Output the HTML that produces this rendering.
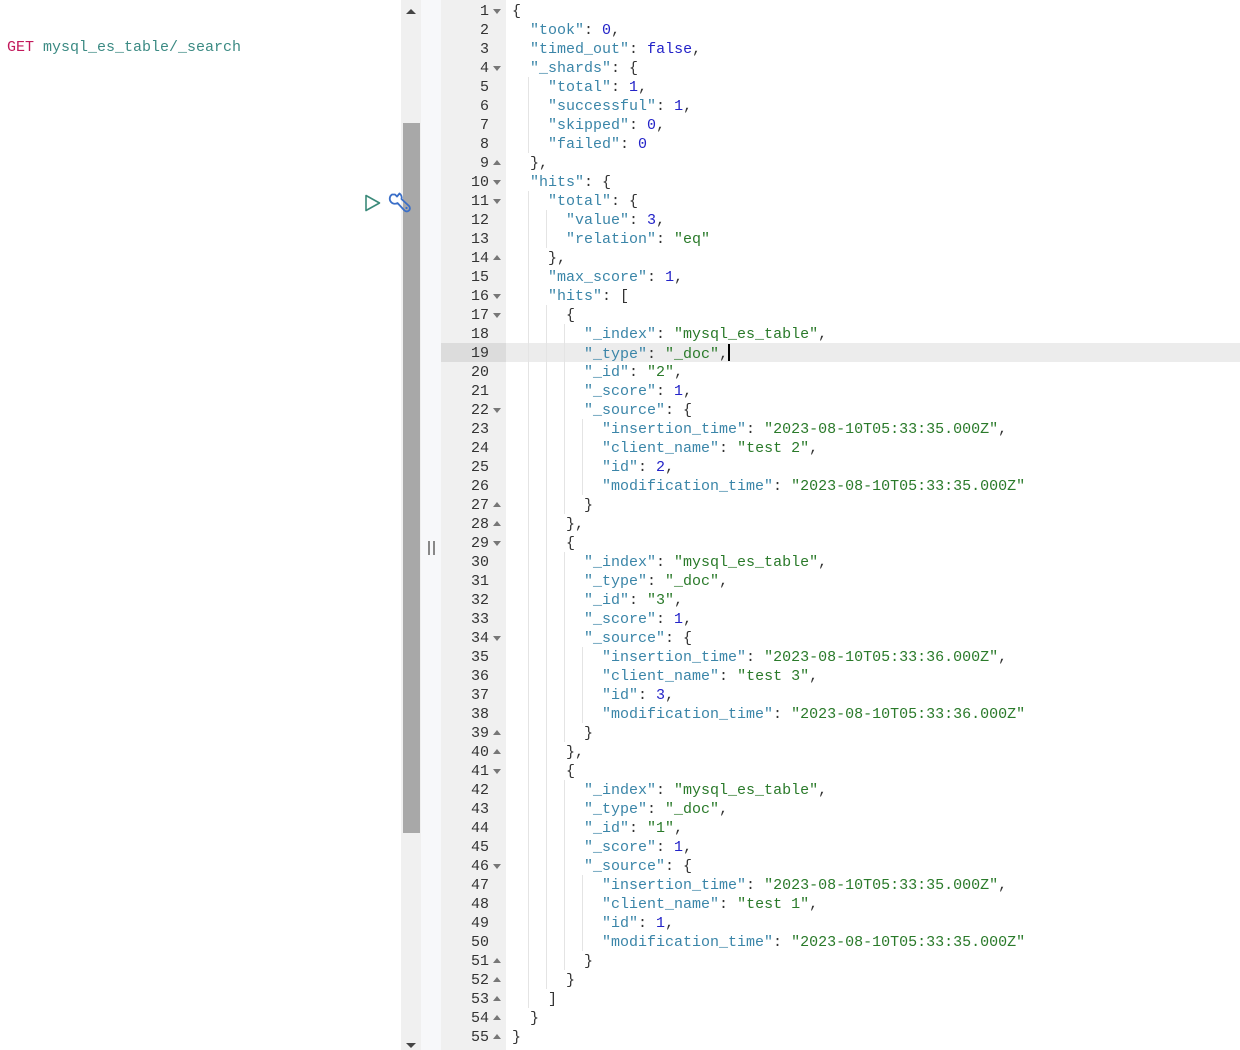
<!DOCTYPE html>
<html><head><meta charset="utf-8"><style>
html,body{margin:0;padding:0;background:#fff;width:1240px;height:1050px;overflow:hidden;position:relative;font-family:"Liberation Mono",monospace;font-size:15px;}
.req{position:absolute;left:7px;top:38px;line-height:20px;white-space:pre;}
.m{color:#c2185b}.p{color:#3b8a83}
.track{position:absolute;left:401px;top:0;width:20px;height:1050px;background:#f0f0f0;}
.thumb{position:absolute;left:403px;top:123px;width:17px;height:710px;background:#a8a8a8;}
.div{position:absolute;left:421px;top:0;width:20px;height:1050px;background:#f7f8fa;}
.gut{position:absolute;left:441px;top:0;width:65px;height:1050px;background:#f0f0f0;}
.hlg{position:absolute;left:441px;top:343px;width:65px;height:19px;background:#dcdcdc;}
.hll{position:absolute;left:506px;top:343px;width:734px;height:19px;background:#ececec;}
.n{position:absolute;left:441px;width:48px;text-align:right;color:#333;height:19px;line-height:19px;margin-top:1px;}
.f{position:absolute;left:493px;width:9px;height:19px;margin-top:1px;}
.f.d::after{content:"";position:absolute;left:0;top:7px;border-left:4px solid transparent;border-right:4px solid transparent;border-top:5px solid #777;}
.f.u::after{content:"";position:absolute;left:0;top:6px;border-left:4px solid transparent;border-right:4px solid transparent;border-bottom:5px solid #777;}
.l{position:absolute;left:512px;height:19px;line-height:19px;white-space:pre;color:#333;margin-top:1px;}
.g{position:absolute;left:16px;top:-1px;height:19px;background:repeating-linear-gradient(90deg,#e4e4e4 0 1px,transparent 1px 18px);}
.k{color:#3a85a8}.s{color:#2a7a2a}.v{color:#2323c8}
.cur{display:inline-block;width:2px;height:17px;background:#000;vertical-align:-3px;}
</style></head><body>
<div class="req"><span class="m">GET</span> <span class="p">mysql_es_table/_search</span></div>
<svg style="position:absolute;left:363px;top:193px" width="20" height="20" viewBox="0 0 20 20"><path d="M3 2.5 L16.5 10 L3 17.5 Z" fill="none" stroke="#3b8a7a" stroke-width="1.6" stroke-linejoin="round"/></svg>
<div class="track"></div><div class="thumb"></div>
<svg style="position:absolute;left:387px;top:191px" width="26" height="26" viewBox="0 0 26 26"><path d="M5 3.5 A5 5 0 0 0 4 11 A5 5 0 0 0 10.5 12 L17.5 19.5 A3 3 0 0 0 22 15 L14.5 8 A5 5 0 0 0 12.5 2.5 L10 5.5 L8 3.5 Z" fill="none" stroke="#3b6fc8" stroke-width="1.8" stroke-linejoin="round"/><circle cx="19.5" cy="17" r="1.1" fill="#3b6fc8"/></svg>
<svg style="position:absolute;left:404px;top:6px" width="14" height="10"><path d="M2 8 L7 3 L12 8 Z" fill="#444"/></svg>
<svg style="position:absolute;left:404px;top:1040px" width="14" height="10"><path d="M2 3 L7 8 L12 3 Z" fill="#444"/></svg>
<div class="div"></div>
<div style="position:absolute;left:428px;top:541px;width:2px;height:14px;background:#888"></div>
<div style="position:absolute;left:433px;top:541px;width:2px;height:14px;background:#888"></div>
<div class="gut"></div><div class="hlg"></div><div class="hll"></div>

<div class="n" style="top:1px">1</div><div class="f d" style="top:1px"></div>
<div class="l" style="top:1px">{</div>
<div class="n" style="top:20px">2</div>
<div class="l" style="top:20px">  <span class="k">"took"</span>: <span class="v">0</span>,</div>
<div class="n" style="top:39px">3</div>
<div class="l" style="top:39px">  <span class="k">"timed_out"</span>: <span class="v">false</span>,</div>
<div class="n" style="top:58px">4</div><div class="f d" style="top:58px"></div>
<div class="l" style="top:58px">  <span class="k">"_shards"</span>: {</div>
<div class="n" style="top:77px">5</div>
<div class="l" style="top:77px"><span class="g" style="width:1px"></span>    <span class="k">"total"</span>: <span class="v">1</span>,</div>
<div class="n" style="top:96px">6</div>
<div class="l" style="top:96px"><span class="g" style="width:1px"></span>    <span class="k">"successful"</span>: <span class="v">1</span>,</div>
<div class="n" style="top:115px">7</div>
<div class="l" style="top:115px"><span class="g" style="width:1px"></span>    <span class="k">"skipped"</span>: <span class="v">0</span>,</div>
<div class="n" style="top:134px">8</div>
<div class="l" style="top:134px"><span class="g" style="width:1px"></span>    <span class="k">"failed"</span>: <span class="v">0</span></div>
<div class="n" style="top:153px">9</div><div class="f u" style="top:153px"></div>
<div class="l" style="top:153px">  },</div>
<div class="n" style="top:172px">10</div><div class="f d" style="top:172px"></div>
<div class="l" style="top:172px">  <span class="k">"hits"</span>: {</div>
<div class="n" style="top:191px">11</div><div class="f d" style="top:191px"></div>
<div class="l" style="top:191px"><span class="g" style="width:1px"></span>    <span class="k">"total"</span>: {</div>
<div class="n" style="top:210px">12</div>
<div class="l" style="top:210px"><span class="g" style="width:19px"></span>      <span class="k">"value"</span>: <span class="v">3</span>,</div>
<div class="n" style="top:229px">13</div>
<div class="l" style="top:229px"><span class="g" style="width:19px"></span>      <span class="k">"relation"</span>: <span class="s">"eq"</span></div>
<div class="n" style="top:248px">14</div><div class="f u" style="top:248px"></div>
<div class="l" style="top:248px"><span class="g" style="width:1px"></span>    },</div>
<div class="n" style="top:267px">15</div>
<div class="l" style="top:267px"><span class="g" style="width:1px"></span>    <span class="k">"max_score"</span>: <span class="v">1</span>,</div>
<div class="n" style="top:286px">16</div><div class="f d" style="top:286px"></div>
<div class="l" style="top:286px"><span class="g" style="width:1px"></span>    <span class="k">"hits"</span>: [</div>
<div class="n" style="top:305px">17</div><div class="f d" style="top:305px"></div>
<div class="l" style="top:305px"><span class="g" style="width:19px"></span>      {</div>
<div class="n" style="top:324px">18</div>
<div class="l" style="top:324px"><span class="g" style="width:37px"></span>        <span class="k">"_index"</span>: <span class="s">"mysql_es_table"</span>,</div>
<div class="n" style="top:343px">19</div>
<div class="l" style="top:343px"><span class="g" style="width:37px"></span>        <span class="k">"_type"</span>: <span class="s">"_doc"</span>,<span class="cur"></span></div>
<div class="n" style="top:362px">20</div>
<div class="l" style="top:362px"><span class="g" style="width:37px"></span>        <span class="k">"_id"</span>: <span class="s">"2"</span>,</div>
<div class="n" style="top:381px">21</div>
<div class="l" style="top:381px"><span class="g" style="width:37px"></span>        <span class="k">"_score"</span>: <span class="v">1</span>,</div>
<div class="n" style="top:400px">22</div><div class="f d" style="top:400px"></div>
<div class="l" style="top:400px"><span class="g" style="width:37px"></span>        <span class="k">"_source"</span>: {</div>
<div class="n" style="top:419px">23</div>
<div class="l" style="top:419px"><span class="g" style="width:55px"></span>          <span class="k">"insertion_time"</span>: <span class="s">"2023-08-10T05:33:35.000Z"</span>,</div>
<div class="n" style="top:438px">24</div>
<div class="l" style="top:438px"><span class="g" style="width:55px"></span>          <span class="k">"client_name"</span>: <span class="s">"test 2"</span>,</div>
<div class="n" style="top:457px">25</div>
<div class="l" style="top:457px"><span class="g" style="width:55px"></span>          <span class="k">"id"</span>: <span class="v">2</span>,</div>
<div class="n" style="top:476px">26</div>
<div class="l" style="top:476px"><span class="g" style="width:55px"></span>          <span class="k">"modification_time"</span>: <span class="s">"2023-08-10T05:33:35.000Z"</span></div>
<div class="n" style="top:495px">27</div><div class="f u" style="top:495px"></div>
<div class="l" style="top:495px"><span class="g" style="width:37px"></span>        }</div>
<div class="n" style="top:514px">28</div><div class="f u" style="top:514px"></div>
<div class="l" style="top:514px"><span class="g" style="width:19px"></span>      },</div>
<div class="n" style="top:533px">29</div><div class="f d" style="top:533px"></div>
<div class="l" style="top:533px"><span class="g" style="width:19px"></span>      {</div>
<div class="n" style="top:552px">30</div>
<div class="l" style="top:552px"><span class="g" style="width:37px"></span>        <span class="k">"_index"</span>: <span class="s">"mysql_es_table"</span>,</div>
<div class="n" style="top:571px">31</div>
<div class="l" style="top:571px"><span class="g" style="width:37px"></span>        <span class="k">"_type"</span>: <span class="s">"_doc"</span>,</div>
<div class="n" style="top:590px">32</div>
<div class="l" style="top:590px"><span class="g" style="width:37px"></span>        <span class="k">"_id"</span>: <span class="s">"3"</span>,</div>
<div class="n" style="top:609px">33</div>
<div class="l" style="top:609px"><span class="g" style="width:37px"></span>        <span class="k">"_score"</span>: <span class="v">1</span>,</div>
<div class="n" style="top:628px">34</div><div class="f d" style="top:628px"></div>
<div class="l" style="top:628px"><span class="g" style="width:37px"></span>        <span class="k">"_source"</span>: {</div>
<div class="n" style="top:647px">35</div>
<div class="l" style="top:647px"><span class="g" style="width:55px"></span>          <span class="k">"insertion_time"</span>: <span class="s">"2023-08-10T05:33:36.000Z"</span>,</div>
<div class="n" style="top:666px">36</div>
<div class="l" style="top:666px"><span class="g" style="width:55px"></span>          <span class="k">"client_name"</span>: <span class="s">"test 3"</span>,</div>
<div class="n" style="top:685px">37</div>
<div class="l" style="top:685px"><span class="g" style="width:55px"></span>          <span class="k">"id"</span>: <span class="v">3</span>,</div>
<div class="n" style="top:704px">38</div>
<div class="l" style="top:704px"><span class="g" style="width:55px"></span>          <span class="k">"modification_time"</span>: <span class="s">"2023-08-10T05:33:36.000Z"</span></div>
<div class="n" style="top:723px">39</div><div class="f u" style="top:723px"></div>
<div class="l" style="top:723px"><span class="g" style="width:37px"></span>        }</div>
<div class="n" style="top:742px">40</div><div class="f u" style="top:742px"></div>
<div class="l" style="top:742px"><span class="g" style="width:19px"></span>      },</div>
<div class="n" style="top:761px">41</div><div class="f d" style="top:761px"></div>
<div class="l" style="top:761px"><span class="g" style="width:19px"></span>      {</div>
<div class="n" style="top:780px">42</div>
<div class="l" style="top:780px"><span class="g" style="width:37px"></span>        <span class="k">"_index"</span>: <span class="s">"mysql_es_table"</span>,</div>
<div class="n" style="top:799px">43</div>
<div class="l" style="top:799px"><span class="g" style="width:37px"></span>        <span class="k">"_type"</span>: <span class="s">"_doc"</span>,</div>
<div class="n" style="top:818px">44</div>
<div class="l" style="top:818px"><span class="g" style="width:37px"></span>        <span class="k">"_id"</span>: <span class="s">"1"</span>,</div>
<div class="n" style="top:837px">45</div>
<div class="l" style="top:837px"><span class="g" style="width:37px"></span>        <span class="k">"_score"</span>: <span class="v">1</span>,</div>
<div class="n" style="top:856px">46</div><div class="f d" style="top:856px"></div>
<div class="l" style="top:856px"><span class="g" style="width:37px"></span>        <span class="k">"_source"</span>: {</div>
<div class="n" style="top:875px">47</div>
<div class="l" style="top:875px"><span class="g" style="width:55px"></span>          <span class="k">"insertion_time"</span>: <span class="s">"2023-08-10T05:33:35.000Z"</span>,</div>
<div class="n" style="top:894px">48</div>
<div class="l" style="top:894px"><span class="g" style="width:55px"></span>          <span class="k">"client_name"</span>: <span class="s">"test 1"</span>,</div>
<div class="n" style="top:913px">49</div>
<div class="l" style="top:913px"><span class="g" style="width:55px"></span>          <span class="k">"id"</span>: <span class="v">1</span>,</div>
<div class="n" style="top:932px">50</div>
<div class="l" style="top:932px"><span class="g" style="width:55px"></span>          <span class="k">"modification_time"</span>: <span class="s">"2023-08-10T05:33:35.000Z"</span></div>
<div class="n" style="top:951px">51</div><div class="f u" style="top:951px"></div>
<div class="l" style="top:951px"><span class="g" style="width:37px"></span>        }</div>
<div class="n" style="top:970px">52</div><div class="f u" style="top:970px"></div>
<div class="l" style="top:970px"><span class="g" style="width:19px"></span>      }</div>
<div class="n" style="top:989px">53</div><div class="f u" style="top:989px"></div>
<div class="l" style="top:989px"><span class="g" style="width:1px"></span>    ]</div>
<div class="n" style="top:1008px">54</div><div class="f u" style="top:1008px"></div>
<div class="l" style="top:1008px">  }</div>
<div class="n" style="top:1027px">55</div><div class="f u" style="top:1027px"></div>
<div class="l" style="top:1027px">}</div>
</body></html>
